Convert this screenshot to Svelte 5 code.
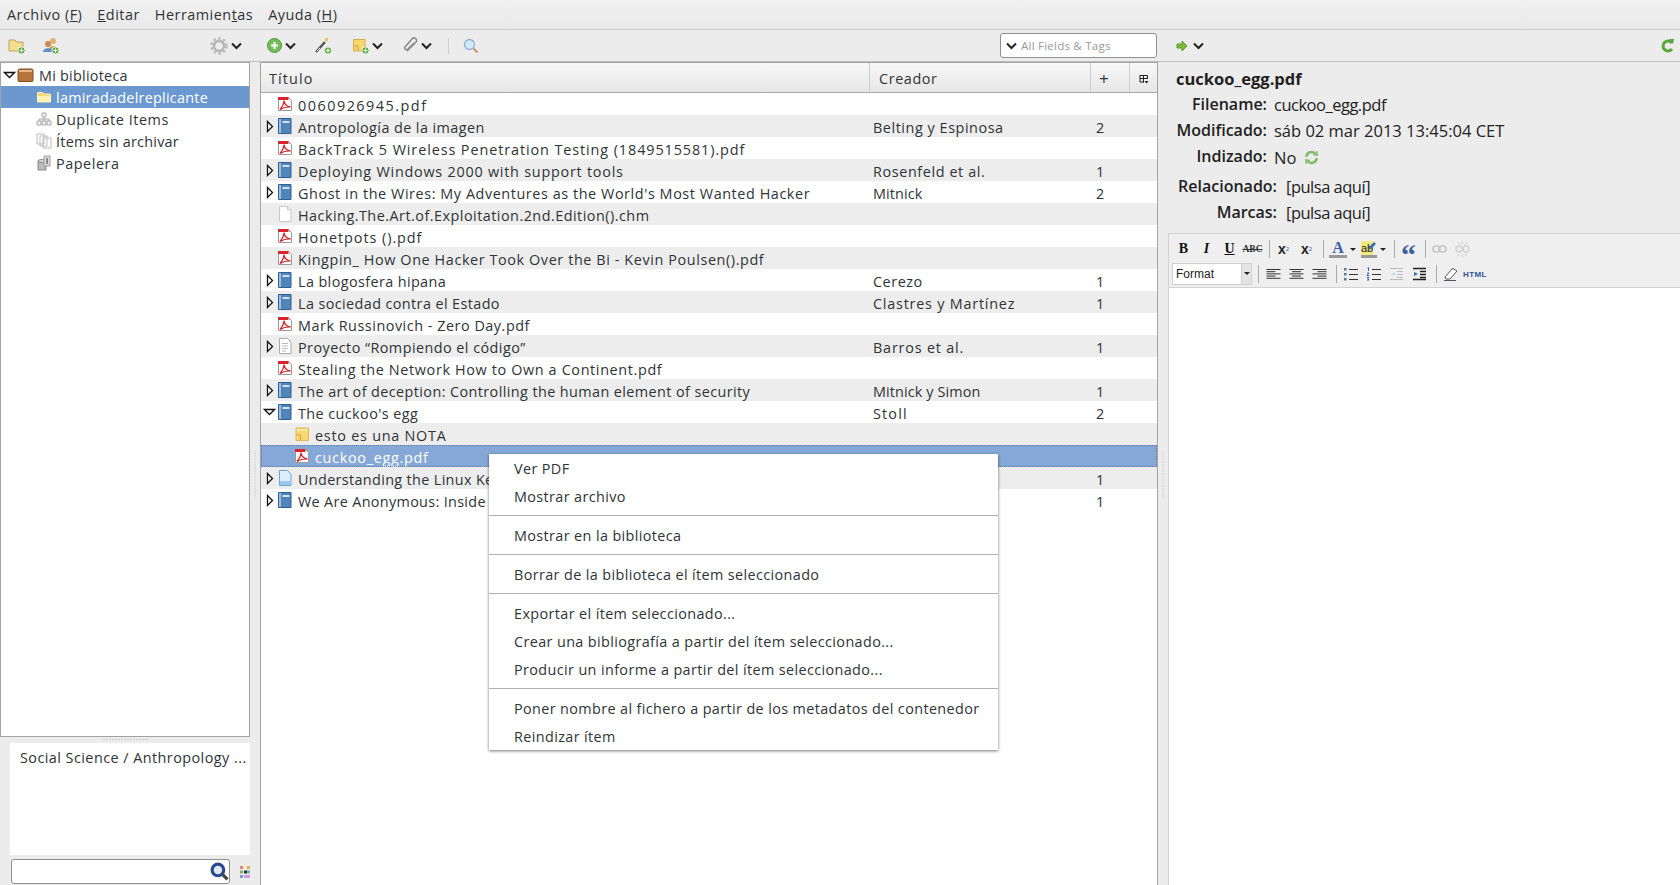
<script>
  const rows = [
    { icon: 'pdf', ls: 1.5, title: '0060926945.pdf' },
    { icon: 'book', ls: 0.42, tw: 'r', title: 'Antropología de la imagen', creator: 'Belting y Espinosa', n: 2 },
    { icon: 'pdf', ls: 0.91, title: 'BackTrack 5 Wireless Penetration Testing (1849515581).pdf' },
    { icon: 'book', ls: 0.76, tw: 'r', title: 'Deploying Windows 2000 with support tools', creator: 'Rosenfeld et al.', cl: 0.6, n: 1 },
    { icon: 'book', ls: 0.57, tw: 'r', title: "Ghost in the Wires: My Adventures as the World's Most Wanted Hacker", creator: 'Mitnick', cl: 0.1, n: 2 },
    { icon: 'file', ls: 0.48, title: 'Hacking.The.Art.of.Exploitation.2nd.Edition().chm' },
    { icon: 'pdf', ls: 0.95, title: 'Honetpots ().pdf' },
    { icon: 'pdf', ls: 0.6, title: 'Kingpin_ How One Hacker Took Over the Bi - Kevin Poulsen().pdf' },
    { icon: 'book', ls: 0.39, tw: 'r', title: 'La blogosfera hipana', creator: 'Cerezo', n: 1 },
    { icon: 'book', ls: 0.4, tw: 'r', title: 'La sociedad contra el Estado', creator: 'Clastres y Martínez', cl: 0.78, n: 1 },
    { icon: 'pdf', ls: 0.52, title: 'Mark Russinovich - Zero Day.pdf' },
    { icon: 'doc', ls: 0.45, tw: 'r', title: 'Proyecto “Rompiendo el código”', creator: 'Barros et al.', cl: 0.8, n: 1 },
    { icon: 'pdf', ls: 0.64, title: 'Stealing the Network How to Own a Continent.pdf' },
    { icon: 'book', ls: 0.41, tw: 'r', title: 'The art of deception: Controlling the human element of security', creator: 'Mitnick y Simon', cl: 0.12, n: 1 },
    { icon: 'book', ls: 0.42, tw: 'd', title: "The cuckoo's egg", creator: 'Stoll', cl: 1.15, n: 2 },
    { icon: 'note', ls: 0.75, child: true, title: 'esto es una NOTA' },
    { icon: 'pdf', ls: 0.7, child: true, sel: true, title: 'cuckoo_egg.pdf' },
    { icon: 'lightdoc', ls: 0.35, tw: 'r', title: 'Understanding the Linux Ke', n: 1 },
    { icon: 'book', ls: 0.33, tw: 'r', title: 'We Are Anonymous: Inside', n: 1 }
  ];
  const menu = [
    ['Ver PDF', 'Mostrar archivo'],
    ['Mostrar en la biblioteca'],
    ['Borrar de la biblioteca el ítem seleccionado'],
    ['Exportar el ítem seleccionado...', 'Crear una bibliografía a partir del ítem seleccionado...', 'Producir un informe a partir del ítem seleccionado...'],
    ['Poner nombre al fichero a partir de los metadatos del contenedor', 'Reindizar ítem']
  ];
</script>

{#snippet plus(x, y)}
  <circle cx={x} cy={y} r="3.6" fill="#5aa83c" stroke="#fff" stroke-width="0.8" />
  <path d="M{x - 2} {y}h4M{x} {y - 2}v4" stroke="#fff" stroke-width="1.2" />
{/snippet}

{#snippet chev()}
  <svg class="chev" width="11" height="8" viewBox="0 0 11 8"><path d="M1 1.500l4.500 4.500L10 1.500" fill="none" stroke="#222" stroke-width="2" /></svg>
{/snippet}

{#snippet twisty(kind)}
  {#if kind === 'r'}
    <svg width="8" height="13" viewBox="0 0 8 13"><path d="M1.500 1.500L6.500 6.500L1.500 11.500Z" fill="#fff" stroke="#111" stroke-width="1.300" /></svg>
  {:else}
    <svg width="13" height="8" viewBox="0 0 13 8"><path d="M1.500 1.500H11.500L6.500 6.500Z" fill="#fff" stroke="#111" stroke-width="1.300" /></svg>
  {/if}
{/snippet}

{#snippet folder(selected)}
  <svg width="16" height="14" viewBox="0 0 16 14">
    <path d="M1.500 2.500h5l1.500 1.500h6.500v8h-13z" fill="#f3d774" stroke="#fff3c0" />
    <path d="M2 6h12v6H2z" fill="#fff2b3" />
  </svg>
{/snippet}

{#snippet itemIcon(kind)}
  <svg width="16" height="16" viewBox="0 0 16 16">
    {#if kind === 'pdf'}
      <path d="M1.500 1.500h10l3 3v10h-13z" fill="#fff" stroke="#999" />
      <path d="M1 1h10.500v3H1z" fill="#d8242a" />
      <path d="M3 13.500C5 11 7 7 7 4.500c0 3 2.500 6 6.500 6.500-3.500-.3-7 .5-10.500 2.500z" fill="none" stroke="#d8242a" stroke-width="1.300" />
    {:else if kind === 'book'}
      <path d="M1.500 .5h12.500v15H1.500z" fill="#4f85b8" stroke="#2f5f90" />
      <path d="M2 1h2v14H2z" fill="#9cc0de" />
      <path d="M5.500 3h7v2h-7z" fill="#cfe2f2" />
    {:else if kind === 'file'}
      <path d="M2.500 .5h8l3.500 3.500v11.500h-11.500z" fill="#fff" stroke="#c9c9c9" />
      <path d="M10.500 .5v3.500h3.500" fill="#eee" stroke="#c9c9c9" />
    {:else if kind === 'doc'}
      <path d="M2.500 .5h8l3.500 3.500v11.500h-11.500z" fill="#fff" stroke="#aaa" />
      <path d="M5 5.500h6M5 8h6M5 10.500h6M5 13h4" stroke="#bbb" />
    {:else if kind === 'lightdoc'}
      <path d="M2.500 .5h8l3.500 3.500v11.500h-11.500z" fill="#dcecfa" stroke="#6ea4d4" />
      <path d="M3 11h10.500v4H3z" fill="#9cc7ec" />
    {:else}
      <path d="M2 2h12.500v12.500h-12.500z" fill="#f6d873" stroke="#e3b650" />
      <path d="M2.500 9l4 0v5" fill="none" stroke="#d89f38" />
      <path d="M3 3h10.500v2h-10.500z" fill="#fbe9a9" />
    {/if}
  </svg>
{/snippet}

<div class="app">
  <div class="menubar">
    <span>Archivo (<u>F</u>)</span>
    <span><u>E</u>ditar</span>
    <span>Herramien<u>t</u>as</span>
    <span>Ayuda (<u>H</u>)</span>
  </div>

  <div class="toolbar">
    <div class="tb-left">
      <svg class="i1" width="18" height="18" viewBox="0 0 18 18">
        <path d="M1 3h6l1.500 2H15v9H1z" fill="#f3de8e" stroke="#b8a35a" />
        {@render plus(13.5, 13.5)}
      </svg>
      <svg class="i2" width="18" height="18" viewBox="0 0 18 18">
        <circle cx="11" cy="4" r="3" fill="#e3b36c" /><path d="M7 12c0-4 8-4 8 0z" fill="#c9a04c" />
        <circle cx="6" cy="7" r="3" fill="#c98a5a" /><path d="M1 15c0-5 10-5 10 0z" fill="#5e8fc8" />
        {@render plus(13.5, 13.5)}
      </svg>
      <span class="push"></span>
      <svg width="20" height="18" viewBox="0 0 20 18">
        <circle cx="10" cy="9" r="5" fill="none" stroke="#b5b5b5" stroke-width="2.500" />
        <circle cx="10" cy="9" r="7.500" fill="none" stroke="#bbb" stroke-width="2.500" stroke-dasharray="2.500 2.400" />
      </svg>
      {@render chev()}
    </div>
    <div class="tb-center">
      <svg class="add" width="17" height="17" viewBox="0 0 17 17">
        <circle cx="8.500" cy="8.500" r="7" fill="#73bd59" stroke="#4d9a3c" />
        <path d="M5 8.500h7M8.500 5v7" stroke="#fff" stroke-width="2" />
      </svg>
      {@render chev()}
      <svg class="wand" width="19" height="18" viewBox="0 0 19 18">
        <path d="M2 15L11 5" stroke="#555" stroke-width="2.500" />
        <path d="M3 14l3-3" stroke="#fff" stroke-width="1" />
        <path d="M11 1h3v3h-3z" fill="#eec34c" />
        {@render plus(14, 13.5)}
      </svg>
      <svg class="note" width="18" height="18" viewBox="0 0 18 18">
        <path d="M1.500 2.500h11.500v11.500h-11.500z" fill="#f6d873" stroke="#d8ab48" />
        <path d="M2 9l4 0v4.500" fill="none" stroke="#d89f38" />
        {@render plus(13.5, 13.5)}
      </svg>
      {@render chev()}
      <svg class="clip" width="17" height="17" viewBox="0 0 17 17">
        <path d="M5 14L14 5a2.500 2.500 0 0 0-4-3L3 10a1.500 1.500 0 0 0 3 2l6-6" fill="none" stroke="#888" stroke-width="1.500" />
      </svg>
      {@render chev()}
      <span class="tb-sep"></span>
      <svg class="mag" width="16" height="16" viewBox="0 0 16 16">
        <circle cx="6.500" cy="6.500" r="5" fill="#d5e8f8" stroke="#8db2d6" stroke-width="1.300" />
        <path d="M10.500 10.500l4 4" stroke="#c99a64" stroke-width="2.200" />
      </svg>
      <span class="push"></span>
      <div class="search">
        <svg width="11" height="8" viewBox="0 0 11 8"><path d="M1 1.500l4.500 4.500L10 1.500" fill="none" stroke="#222" stroke-width="2" /></svg>
        <span>All Fields &amp; Tags</span>
      </div>
    </div>
    <div class="tb-right">
      <svg width="12" height="12" viewBox="0 0 12 12"><path d="M1 4h5V1l5 5-5 5V8H1z" fill="#7cbb3f" stroke="#5a9a2c" /></svg>
      {@render chev()}
      <span class="push"></span>
      <svg width="14" height="16" viewBox="0 0 14 16">
        <path d="M11 11a5 5 0 1 1 0-6" fill="none" stroke="#5aa83c" stroke-width="3" />
        <path d="M8 1l5 0-1 5z" fill="#5aa83c" />
      </svg>
    </div>
  </div>

  <div class="main">
    <div class="left">
      <div class="tree">
        <div class="trow top">
          <span class="tw">{@render twisty('d')}</span>
          <svg width="17" height="14" viewBox="0 0 17 14">
            <path d="M1 2.500q0-1.500 1.500-1.500h12q1.500 0 1.500 1.500v10q0 1-1 1h-13q-1 0-1-1z" fill="#b8733a" stroke="#7f4f24" />
            <path d="M2 2h13v2h-13z" fill="#e3b98c" />
          </svg>
          <span class="lib">Mi biblioteca</span>
        </div>
        <div class="trow sub sel">{@render folder(true)}<span>lamiradadelreplicante</span></div>
        <div class="trow sub wide">
          <svg width="16" height="14" viewBox="0 0 16 14" fill="#eee" stroke="#aaa"><path d="M6 1h4v4H6zM1 9h4v4H1zM6 9h4v4H6zM11 9h4v4h-4zM3 9V7h10v2M8 5v4" /></svg>
          <span>Duplicate Items</span>
        </div>
        <div class="trow sub">
          <svg width="16" height="16" viewBox="0 0 16 16" fill="#fff" stroke="#bbb"><path d="M1 1h7v10H1zM4 3h7v10H4zM7 5h8v10H7z" /></svg>
          <span>Ítems sin archivar</span>
        </div>
        <div class="trow sub wide">
          <svg width="16" height="16" viewBox="0 0 16 16">
            <path d="M2 6h8v9H2z" fill="#bbb" stroke="#888" /><ellipse cx="6" cy="6" rx="4" ry="1.500" fill="#ddd" stroke="#888" />
            <path d="M8 1h6v10H8z" fill="#ddd" stroke="#999" /><path d="M10 3h2v6h-2z" fill="#888" />
          </svg>
          <span>Papelera</span>
        </div>
      </div>
      <div class="hgrip"></div>
      <div class="tags">Social Science / Anthropology ...</div>
      <div class="tagfoot">
        <div class="tagsearch">
          <svg width="19" height="19" viewBox="0 0 18 18">
            <circle cx="7.500" cy="7.500" r="5.500" fill="#dfe8f5" stroke="#2b4a8c" stroke-width="3" />
            <path d="M12 12l4.500 4.500" stroke="#444" stroke-width="3" />
          </svg>
        </div>
        <svg class="tagbtn" width="10" height="12" viewBox="0 0 10 12">
          <path d="M0 0h3v3H0z" fill="#e9826a" /><path d="M0 4.500h3v3H0z" fill="#7fb26a" /><path d="M0 9h3v3H0z" fill="#7f93d8" />
          <path d="M4 4.500h3v3H4z" fill="#333" /><path d="M4 9h3v3H4z" fill="#d49ad8" /><path d="M7 0h3v3H7z" fill="#e8b04c" />
          <path d="M7 4.500h3v3H7z" fill="#69b6a0" /><path d="M7 9h3v3H7z" fill="#c8a0d8" />
        </svg>
      </div>
    </div>

    <div class="vgrip"><span></span></div>

    <div class="center">
      <div class="thead">
        <div class="th c-title">Título</div>
        <div class="th c-creator">Creador</div>
        <div class="th c-n">+</div>
        <div class="th c-pick">
          <svg width="10" height="10" viewBox="0 0 10 10" fill="none" stroke="#222"><path d="M1 1.500h7.500M1 1v7h4M1 4.500h7M4.500 1.500v7M8.500 1.500V5" /><path d="M5.500 7h4L7.500 9.500z" fill="#222" stroke="none" /></svg>
        </div>
      </div>
      <div class="tbody">
        {#each rows as r, i}
          <div class="row" class:alt={i % 2 === 1} class:selrow={r.sel}>
            <div class="c-title cell" class:child={r.child}>
              <span class="tw2">{#if r.tw}{@render twisty(r.tw)}{/if}</span>
              {@render itemIcon(r.icon)}
              <span class="txt" style:letter-spacing="{r.ls}px">{r.title}</span>
            </div>
            <div class="c-creator cell cr" style:letter-spacing="{r.cl ?? 0.55}px">{r.creator ?? ''}</div>
            <div class="c-n cell nn">{r.n ?? ''}</div>
          </div>
        {/each}
      </div>
    </div>

    <div class="vgrip"><span></span></div>

    <div class="right">
      <div class="info">
        <div class="fname">cuckoo_egg.pdf</div>
        <div class="meta">
          <b>Filename:</b><span class="narrow">cuckoo_egg.pdf</span>
          <b>Modificado:</b><span>sáb 02 mar 2013 13:45:04 CET</span>
          <b>Indizado:</b>
          <span class="idx">No
            <svg width="15" height="15" viewBox="0 0 13 13" fill="none" stroke="#7fbf6a" stroke-width="2.200"><path d="M2 6a4.500 4.500 0 0 1 8-2.500M11 7a4.500 4.500 0 0 1-8 2.500" /><path d="M8 4l3.500.5L11 1M5 9l-3.500-.5L2 12" stroke-width="1.300" /></svg>
          </span>
        </div>
        <div class="meta meta2">
          <b>Relacionado:</b><span class="narrow">[pulsa aquí]</span>
          <b>Marcas:</b><span class="narrow">[pulsa aquí]</span>
        </div>
      </div>
      <div class="editor">
        <div class="ebar">
          <div class="erow">
            <span class="eb serif bold">B</span>
            <span class="eb serif bold it">I</span>
            <span class="eb serif bold und">U</span>
            <span class="eb serif abc">ABC</span>
            <span class="esep"></span>
            <span class="eb sx"><b>x</b><sub>2</sub></span>
            <span class="eb sx"><b>x</b><sup>2</sup></span>
            <span class="esep"></span>
            <span class="eb color"><b>A</b><i></i></span>
            <span class="drop"></span>
            <span class="eb color hl"><b>ab</b><i></i>
              <svg class="pencil" width="10" height="10" viewBox="0 0 10 10"><path d="M1 9l1-3 5-5 2 2-5 5z" fill="#3c6cb0" /></svg>
            </span>
            <span class="drop last"></span>
            <span class="esep"></span>
            <span class="eb quote">“</span>
            <span class="esep"></span>
            <span class="eb">
              <svg width="15" height="10" viewBox="0 0 15 10" fill="none" stroke="#c4c4c4" stroke-width="1.600"><rect x="1" y="2" width="7" height="6" rx="3" /><rect x="7" y="2" width="7" height="6" rx="3" /></svg>
            </span>
            <span class="eb">
              <svg width="15" height="16" viewBox="0 0 15 16" fill="none" stroke="#d0d0d0" stroke-width="1.400"><rect x="1" y="5" width="6" height="6" rx="3" /><rect x="8" y="5" width="6" height="6" rx="3" /><path d="M7.500 0v3M3 1l2 2.500M12 1l-2 2.500M7.500 13v3M3 15l2-2.500M12 15l-2-2.500" stroke-width="1" /></svg>
            </span>
          </div>
          <div class="erow second">
            <div class="fmt"><span>Format</span><em></em></div>
            <span class="esep"></span>
            {#each [0, 1, 2] as k}
              <span class="eb">
                <svg width="15" height="12" viewBox="0 0 15 12" stroke="#333" stroke-width="1">
                  {#each [14, 9, 14, 9, 14] as w, j}
                    <line x1={k === 0 ? 0.5 : k === 1 ? 7.5 - w / 2 : 14.5 - w} x2={k === 0 ? 0.5 + w : k === 1 ? 7.5 + w / 2 : 14.5} y1={1.5 + j * 2.2} y2={1.5 + j * 2.2} />
                  {/each}
                </svg>
              </span>
            {/each}
            <span class="esep"></span>
            <span class="eb"><svg width="15" height="14" viewBox="0 0 15 14" stroke="#333"><path d="M6 2.500h9M6 7.500h9M6 12.500h9" /><path d="M1 1h2.500v2.500H1zM1 6h2.500v2.500H1zM1 11h2.500v2.500H1z" fill="#5577aa" stroke="none" /></svg></span>
            <span class="eb"><svg width="15" height="14" viewBox="0 0 15 14" stroke="#333"><path d="M6 2.500h9M6 7.500h9M6 12.500h9" /><path d="M1.500 1l1-.5v3.500M1 6h2L1 8.500h2.200M1 10.500h2l-1 1 1 1.500H1" fill="none" stroke="#3a5ea8" /></svg></span>
            <span class="eb"><svg width="15" height="14" viewBox="0 0 15 14" stroke="#bbb"><path d="M1 1.500h13M8 4.500h6M8 7.500h6M8 10.500h6M1 12.500h13" /><path d="M6 5L2 7l4 2z" fill="#c9d6e8" stroke="none" /></svg></span>
            <span class="eb"><svg width="15" height="14" viewBox="0 0 15 14" stroke="#222"><path d="M1 1.500h13M8 4.500h6M8 7.500h6M8 10.500h6M1 12.500h13" stroke-width="1.300" /><path d="M2 5l4 2-4 2z" fill="#3a6ea8" stroke="none" /></svg></span>
            <span class="esep"></span>
            <span class="eb"><svg width="16" height="14" viewBox="0 0 16 14"><path d="M2 10L9 2q1-1 2 0l3 2-7 8H3z" fill="#fff" stroke="#556" /><path d="M1 13.500h12" stroke="#556" /></svg></span>
            <span class="html">HTML</span>
          </div>
        </div>
        <div class="earea"></div>
      </div>
    </div>
  </div>

  <div class="ctx">
    {#each menu as group, gi}
      {#if gi > 0}<div class="msep"></div>{/if}
      {#each group as m}<div class="mi">{m}</div>{/each}
    {/each}
  </div>
</div>

<style>
  :global(body) { margin: 0; background: #ececec; }
  .app {
    position: relative;
    width: 1680px;
    height: 885px;
    overflow: hidden;
    display: flex;
    flex-direction: column;
    background: #ececec;
    color: #2e3436;
    font-family: "Open Sans", "Noto Sans", sans-serif;
    font-size: 14.4px;
  }
  svg { display: block; flex: none; }
  .menubar {
    height: 30px;
    box-sizing: border-box;
    display: flex;
    align-items: center;
    gap: 15px;
    padding: 0 7px;
    background: linear-gradient(#f1f1f1, #e9e9e9);
    border-bottom: 1px solid #c9c9c9;
    letter-spacing: 0.5px;
  }
  .toolbar {
    height: 32px;
    box-sizing: border-box;
    display: flex;
    align-items: center;
    border-bottom: 1px solid #bdbdbd;
    background: #ececec;
  }
  .tb-left { width: 260px; flex: none; display: flex; align-items: center; box-sizing: border-box; padding: 0 18px 0 8px; }
  .i2 { margin-left: 16px; }
  .push { flex: 1; }
  .chev { margin-left: 2px; }
  .tb-center { width: 898px; box-sizing: border-box; padding-right: 1px; padding-left: 6px; flex: none; display: flex; align-items: center; }
  .wand { margin-left: 18px; }
  .note { margin-left: 19px; }
  .clip { margin-left: 19px; }
  .tb-sep { width: 1px; height: 16px; background: #d0d0d0; margin: 0 14px 0 16px; }
  .search {
    width: 157px;
    height: 25px;
    box-sizing: border-box;
    border: 1px solid #8e8e8e;
    border-radius: 3px;
    background: #fff;
    display: flex;
    align-items: center;
    gap: 4px;
    padding-left: 5px;
    font-size: 11.6px;
    letter-spacing: 0.2px;
    color: #999;
  }
  .tb-right { flex: 1; display: flex; align-items: center; padding: 0 5px 0 18px; }
  .tb-right .chev { margin-left: 5px; }
  .main { flex: 1; display: flex; min-height: 0; }
  .left { width: 250px; flex: none; display: flex; flex-direction: column; }
  .tree {
    height: 675px;
    box-sizing: border-box;
    border: 1px solid #a3a3a3;
    background: #fff;
    padding-top: 1px;
  }
  .trow { height: 22px; display: flex; align-items: center; white-space: nowrap; letter-spacing: 0.25px; }
  .trow.wide { letter-spacing: 0.55px; }
  .trow.top { padding-left: 2px; }
  .tw { width: 14px; display: block; }
  .lib { margin-left: 5px; }
  .trow.sub { padding-left: 35px; gap: 4px; }
  .trow.sel { background: #6b98cf; color: #fff; }
  .hgrip {
    height: 5px;
    margin-bottom: 1px;
    background: radial-gradient(circle, #aaa 0.6px, transparent 0.8px) center / 3px 3px repeat-x;
    width: 48px;
    align-self: center;
  }
  .tags {
    margin-left: 10px;
    height: 112px;
    box-sizing: border-box;
    background: #fff;
    padding: 5px 10px;
    white-space: nowrap;
    letter-spacing: 0.45px;
  }
  .tagfoot { display: flex; align-items: center; padding: 4px 0 0 11px; }
  .tagsearch {
    width: 221px;
    height: 25px;
    box-sizing: border-box;
    border: 1px solid #8e8e8e;
    border-radius: 3px;
    background: #fff;
    display: flex;
    justify-content: flex-end;
    align-items: center;
    padding-right: 0;
  }
  .tagbtn { margin-left: 10px; }
  .vgrip { width: 10px; flex: none; display: flex; align-items: center; justify-content: center; }
  .vgrip span {
    display: block;
    width: 4px;
    height: 48px;
    background: radial-gradient(circle, #b5b5b5 0.6px, transparent 0.8px) center / 3px 3px;
  }
  .center {
    width: 898px;
    flex: none;
    box-sizing: border-box;
    border: 1px solid #a3a3a3;
    border-bottom: 0;
    background: #fff;
    display: flex;
    flex-direction: column;
  }
  .thead {
    height: 30px;
    box-sizing: border-box;
    display: flex;
    border-bottom: 1px solid #a8a8a8;
    background: linear-gradient(#f8f8f8, #e6e6e6);
    letter-spacing: 0.6px;
  }
  .th { display: flex; align-items: center; padding: 2px 0 0 8px; box-sizing: border-box; border-right: 1px solid #cfcfcf; }
  .th.c-title { letter-spacing: 1.1px; }
  .c-title { width: 609px; flex: none; }
  .c-creator { width: 221px; flex: none; }
  .c-n { width: 39px; flex: none; }
  .th.c-creator { padding-left: 9px; }
  .th.c-n { font-size: 17px; padding-left: 8px; }
  .th.c-pick { width: 27px; padding-left: 9px; border-right: 0; }
  .row { height: 22px; display: flex; white-space: nowrap; letter-spacing: 0.55px; position: relative; }
  .row.alt { background: #ededed; }
  .row.selrow { background: #85a8d7; color: #fff; outline: 1px dotted #5f7ea8; outline-offset: -1px; }
  .cell { display: flex; align-items: center; box-sizing: border-box; }
  .tw2 { width: 16px; display: flex; justify-content: center; flex: none; padding-left: 1px; box-sizing: border-box; }
  .cell.c-title { overflow: hidden; }
  .cell.c-title .txt { margin-left: 5px; padding-top: 2px; }
  .cell.c-title.child { padding-left: 17px; }
  .cell.cr { padding: 2px 0 0 3px; }
  .cell.nn { padding: 2px 0 0 5px; }
  .right { flex: 1; display: flex; flex-direction: column; min-width: 0; }
  .info { height: 171px; box-sizing: border-box; padding: 6px 0 0 8px; color: #222; }
  .fname { font-weight: 700; height: 23px; line-height: 21px; font-size: 16.5px; }
  .meta {
    display: grid;
    grid-template-columns: 91px auto;
    grid-auto-rows: 26px;
    column-gap: 7px;
    align-items: center;
    justify-content: start;
    font-size: 16.5px;
  }
  .meta b { text-align: right; font-weight: 600; font-size: 16px; white-space: nowrap; }
  .narrow { letter-spacing: -0.5px; }
  .meta2 { grid-template-columns: 101px auto; margin-top: 4px; column-gap: 9px; }
  .idx { display: flex; align-items: center; gap: 8px; padding-top: 3px; }
  .editor { flex: 1; display: flex; flex-direction: column; border-top: 1px solid #d2d2d2; border-left: 1px solid #d2d2d2; }
  .ebar { height: 54px; box-sizing: border-box; padding: 2px 0 0 3px; background: #efefef; border-bottom: 1px solid #d2d2d2; }
  .erow { height: 26px; display: flex; align-items: center; }
  .erow.second { margin-top: -1px; }
  .eb { width: 23px; height: 22px; flex: none; display: flex; align-items: center; justify-content: center; }
  .serif { font-family: "Liberation Serif", serif; }
  .bold { font-weight: 700; font-size: 14px; color: #111; }
  .it { font-style: italic; }
  .und { text-decoration: underline; }
  .abc { font-size: 9.5px; font-weight: 700; text-decoration: line-through; }
  .esep { width: 1px; height: 18px; background: #aaa; margin: 0 2px 0 5px; flex: none; }
  .sx { font-family: "Liberation Sans", sans-serif; font-size: 14px; color: #222; }
  .sx sub, .sx sup { font-size: 6px; color: #3a5ea8; }
  .color { flex-direction: column; width: 18px; margin-left: 3px; position: relative; }
  .color b { font: 700 16px/15px "Liberation Serif", serif; color: #3a5ea8; }
  .color i { display: block; width: 100%; height: 3px; background: #999; }
  .hl { width: 16px; margin-left: 4px; }
  .hl b { font: 400 11px/14px "Liberation Sans", sans-serif; background: #f2ea7e; color: #222; align-self: flex-start; }
  .pencil { position: absolute; right: 0; top: 3px; }
  .drop { width: 0; height: 0; border: 3px solid transparent; border-top-color: #222; border-bottom: 0; margin: 0 1px 0 3px; flex: none; }
  .drop.last { margin-right: 3px; }
  .quote { font: 700 30px/1 "Liberation Serif", serif; color: #3c5f9c; padding-top: 12px; box-sizing: border-box; }
  .fmt {
    width: 80px;
    height: 22px;
    box-sizing: border-box;
    background: #fff;
    border: 1px solid #d0d0d0;
    display: flex;
    align-items: center;
    font: 12px "Liberation Sans", sans-serif;
    color: #222;
    padding-left: 3px;
    position: relative;
  }
  .fmt em {
    position: absolute;
    right: 0;
    top: 0;
    bottom: 0;
    width: 9px;
    background: #e4e4e4;
    border-left: 1px solid #d0d0d0;
  }
  .fmt em::after {
    content: '';
    position: absolute;
    left: 2px;
    top: 8px;
    border: 3px solid transparent;
    border-top-color: #222;
    border-bottom: 0;
  }
  .fmt + .esep { margin-left: 6px; margin-right: 3px; }
  .html { font: 700 8px "Liberation Sans", sans-serif; color: #2c5597; letter-spacing: 0.4px; margin-left: 1px; }
  .earea { flex: 1; background: #fff; }
  .ctx {
    position: absolute;
    left: 489px;
    top: 454px;
    width: 509px;
    height: 296px;
    box-sizing: border-box;
    background: #fff;
    box-shadow: 0 1px 3px rgba(0, 0, 0, 0.55);
    letter-spacing: 0.38px;
    color: #2e3436;
  }
  .mi { height: 28px; line-height: 30px; padding-left: 25px; white-space: nowrap; }
  .msep { height: 11px; position: relative; }
  .msep::after { content: ''; position: absolute; left: 0; right: 0; top: 5px; height: 1px; background: #b0b0b0; }
</style>
